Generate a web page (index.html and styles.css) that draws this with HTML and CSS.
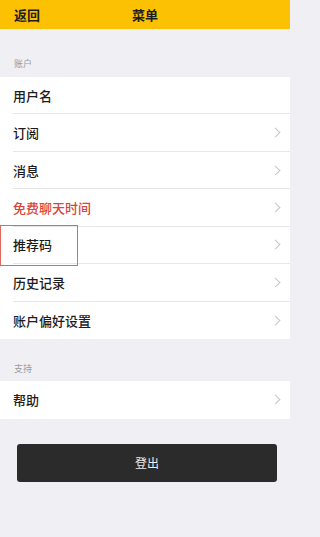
FILE: index.html
```html
<!DOCTYPE html>
<html lang="zh">
<head>
<meta charset="utf-8">
<title>菜单</title>
<link rel="stylesheet" href="styles.css">
</head>
<body>
<header class="topbar">
  <span class="back">返回</span>
  <span class="title">菜单</span>
  <span></span>
</header>
<div class="section-label first">账户</div>
<ul class="list">
  <li class="row"><span>用户名</span></li>
  <li class="row"><span>订阅</span><i class="chev"></i></li>
  <li class="row"><span>消息</span><i class="chev"></i></li>
  <li class="row red"><span>免费聊天时间</span><i class="chev"></i></li>
  <li class="row marked"><span>推荐码</span><i class="chev"></i><b class="highlight"></b></li>
  <li class="row"><span>历史记录</span><i class="chev"></i></li>
  <li class="row last"><span>账户偏好设置</span><i class="chev"></i></li>
</ul>
<div class="section-label second">支持</div>
<ul class="list">
  <li class="row last"><span>帮助</span><i class="chev"></i></li>
</ul>
<div class="actions">
  <button class="logout">登出</button>
</div>
</body>
</html>
```
FILE: styles.css
```css
* { box-sizing: border-box; }
html, body {
  margin: 0;
  padding: 0;
  background: #efeff4;
  font-family: "Noto Sans CJK SC", "Noto Sans", sans-serif;
  width: 290px;
  height: 537px;
  overflow: hidden;
}
.topbar {
  height: 29px;
  background: #fcc102;
  display: grid;
  grid-template-columns: 1fr auto 1fr;
  align-items: center;
  padding: 0 14px;
  font-size: 13px;
  font-weight: 700;
  color: #1e1e1e;
}
.topbar .title { padding-left: 0; }
.section-label {
  display: flex;
  align-items: flex-end;
  padding: 0 14px 7px;
  font-size: 9px;
  color: #9a9a9f;
}
.section-label.first { height: 48px; }
.section-label.second { height: 42px; padding-bottom: 6px; }
.list {
  list-style: none;
  margin: 0;
  padding: 0;
  background: #fff;
}
.row {
  position: relative;
  height: 37.45px;
  display: flex;
  align-items: center;
  justify-content: space-between;
  margin-left: 13px;
  padding-right: 11px;
  border-bottom: 1px solid #e6e6e8;
  font-size: 13px;
  font-weight: 500;
  color: #1c1c1c;
}
.row.last { border-bottom: none; }
.row.red { color: #d8453b; }
.chev {
  width: 7px;
  height: 7px;
  border-top: 1.3px solid #c4c4c8;
  border-right: 1.3px solid #c4c4c8;
  transform: rotate(45deg);
}
.highlight {
  position: absolute;
  left: -13px;
  top: -2px;
  width: 78px;
  height: 41px;
  border: 1.5px solid #e2675f;
  pointer-events: none;
}
.actions {
  padding: 25px 13px 0 17px;
}
.logout {
  display: block;
  width: 100%;
  height: 38px;
  border: none;
  border-radius: 3px;
  background: #2b2b2b;
  color: #ececec;
  font-family: "Noto Sans CJK SC", "Noto Sans", sans-serif;
  font-size: 12px;
}
```
